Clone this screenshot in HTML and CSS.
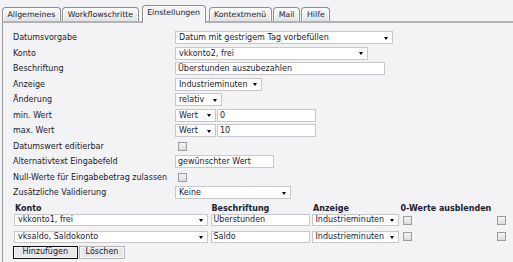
FILE: index.html
```html
<!DOCTYPE html>
<html lang="de">
<head>
<meta charset="utf-8">
<title>Einstellungen</title>
<link rel="stylesheet" href="styles.css">
</head>
<body>
<div class="tabs">
  <div class="tab">Allgemeines</div>
  <div class="tab">Workflowschritte</div>
  <div class="tab active">Einstellungen</div>
  <div class="tab">Kontextmenü</div>
  <div class="tab">Mail</div>
  <div class="tab">Hilfe</div>
</div>
<div class="panel">
  <div class="form">
    <div class="label">Datumsvorgabe</div>
    <div class="ctl"><span class="sel w218">Datum mit gestrigem Tag vorbefüllen</span></div>
    <div class="label">Konto</div>
    <div class="ctl"><span class="sel w193">vkkonto2, frei</span></div>
    <div class="label">Beschriftung</div>
    <div class="ctl"><span class="txt w210">Überstunden auszubezahlen</span></div>
    <div class="label">Anzeige</div>
    <div class="ctl"><span class="sel w87">Industrieminuten</span></div>
    <div class="label">Änderung</div>
    <div class="ctl"><span class="sel w47">relativ</span></div>
    <div class="label">min. Wert</div>
    <div class="ctl"><span class="sel w41">Wert</span><span class="txt w99 join">0</span></div>
    <div class="label">max. Wert</div>
    <div class="ctl"><span class="sel w41">Wert</span><span class="txt w99 join">10</span></div>
    <div class="label">Datumswert editierbar</div>
    <div class="ctl"><span class="chk"></span></div>
    <div class="label">Alternativtext Eingabefeld</div>
    <div class="ctl"><span class="txt w99">gewünschter Wert</span></div>
    <div class="label">Null-Werte für Eingabebetrag zulassen</div>
    <div class="ctl"><span class="chk"></span></div>
    <div class="label">Zusätzliche Validierung</div>
    <div class="ctl"><span class="sel w116">Keine</span></div>
  </div>

  <div class="tbl thead">
    <div>Konto</div>
    <div>Beschriftung</div>
    <div>Anzeige</div>
    <div>0-Werte ausblenden</div>
    <div></div>
  </div>
  <div class="tbl trow">
    <div><span class="sel w194 sm">vkkonto1, frei</span></div>
    <div><span class="txt w99 sm">Überstunden</span></div>
    <div><span class="sel w87 sm">Industrieminuten</span></div>
    <div><span class="chk tchk"></span></div>
    <div><span class="chk tchk2"></span></div>
  </div>
  <div class="tbl trow second">
    <div><span class="sel w194 sm">vksaldo, Saldokonto</span></div>
    <div><span class="txt w99 sm">Saldo</span></div>
    <div><span class="sel w87 sm">Industrieminuten</span></div>
    <div><span class="chk tchk"></span></div>
    <div><span class="chk tchk2"></span></div>
  </div>

  <div class="buttons">
    <button class="btn primary">Hinzufügen</button>
    <button class="btn">Löschen</button>
  </div>
</div>
</body>
</html>
```

FILE: styles.css
```css
* { box-sizing: border-box; }

body {
  margin: 0;
  background: #f3f3f5;
  font-family: "DejaVu Sans", Verdana, sans-serif;
  font-size: 8px;
  color: #20202c;
}

.tabs {
  display: flex;
  align-items: flex-end;
  height: 21px;
  padding-left: 2px;
  gap: 1.5px;
  position: relative;
  z-index: 1;
  font-size: 7.8px;
}

.tab {
  height: 14px;
  line-height: 13px;
  padding: 0 4.5px;
  border: 1px solid #8e8e92;
  border-bottom: 0;
  border-radius: 4px 4px 0 0;
  background: linear-gradient(#fdfdfd, #e2e2e4);
  box-shadow: inset 1px 1px 0 #fff, inset -1px 0 0 #fff;
  white-space: nowrap;
}

.tab.active {
  height: 18px;
  line-height: 14px;
  margin: 0 1.5px -2px 1.5px;
  background: #f3f3f5;
}

.panel {
  margin-left: 2px;
  border-top: 2px solid #b2b2b6;
  border-left: 1px solid #9a9a9e;
  min-height: calc(100vh - 21px);
  padding: 6.75px 0 0 10px;
}

.form {
  display: grid;
  grid-template-columns: 162px auto;
  grid-auto-rows: 15.5px;
  align-items: center;
}

.label { white-space: nowrap; }

.ctl {
  display: flex;
  align-items: center;
}

.sel,
.txt {
  position: relative;
  display: block;
  height: 13px;
  line-height: 11px;
  border: 1px solid #c8c8cc;
  background: #fff;
  white-space: nowrap;
  overflow: hidden;
}

.sel { padding: 0 12px 0 3px; }
.txt { padding: 0 2px; }

.sel::after {
  content: "";
  position: absolute;
  right: 4px;
  top: 4.5px;
  border-left: 2.5px solid transparent;
  border-right: 2.5px solid transparent;
  border-top: 3px solid #000;
}

.join { margin-left: 1px; }

.sm { height: 12px; line-height: 10px; }
.sel.sm::after { top: 4px; }

.w218 { width: 218px; }
.w193 { width: 193px; }
.w194 { width: 194px; }
.w210 { width: 210px; }
.w87 { width: 87px; }
.w47 { width: 47px; }
.w41 { width: 41px; }
.w99 { width: 99px; }
.w116 { width: 116px; }

.chk {
  display: block;
  width: 9px;
  height: 9px;
  margin-left: 3px;
  border: 1px solid #9c9ca0;
  background: linear-gradient(#f4f4f4, #dcdcdc);
}

.tbl {
  display: grid;
  grid-template-columns: 196.5px 101px 89px 94.5px 14px;
  margin-left: 1px;
  align-items: center;
}

.thead {
  margin-top: 2.75px;
  height: 11px;
  line-height: 11px;
  font-weight: bold;
  white-space: nowrap;
}

.thead > div:first-child { padding-left: 1px; }
.thead > div:nth-child(2) { padding-left: 1px; }
.thead > div:nth-child(3) { padding-left: 1.5px; }

.trow { height: 12px; }
.trow > div { display: flex; align-items: center; }
.trow.second { margin-top: 4.5px; }

.tchk { margin-left: 2.5px; }
.tchk2 { margin-left: 2px; }

.buttons {
  display: flex;
  gap: 1.5px;
  margin-top: 3px;
}

.btn {
  height: 13px;
  font: inherit;
  color: inherit;
  padding: 0;
  margin: 0;
  background: #e8e8ea;
  border: 1px solid #b4b4b8;
  box-shadow: inset 0 0 0 1px #f8f8f8;
  line-height: 10px;
}

.btn.primary {
  width: 64.5px;
  border-color: #111;
}

.btn:not(.primary) { width: 46px; }
```
